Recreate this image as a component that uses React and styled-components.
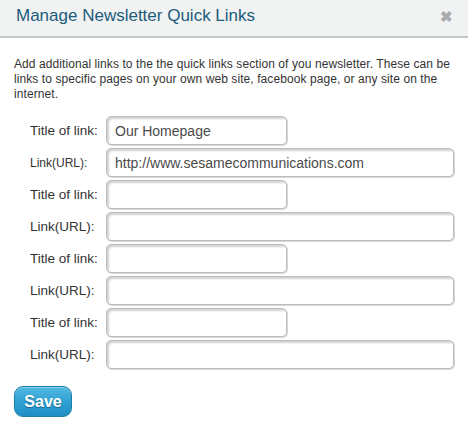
import React from "react";
import styled, { createGlobalStyle } from "styled-components";

const Global = createGlobalStyle`
  html, body { margin: 0; padding: 0; background: #fff; }
  body { font-family: Arial, "Liberation Sans", sans-serif; }
`;

const Dialog = styled.div`
  width: 468px;
  height: 425px;
  background: #fff;
  box-sizing: border-box;
`;

const Header = styled.div`
  height: 38px;
  box-sizing: border-box;
  background: #f1f2f2;
  border-bottom: 2px solid #c3c6c6;
  display: flex;
  align-items: center;
  justify-content: space-between;
  padding: 0 16px 0 16px;
`;

const Title = styled.h1`
  margin: 0;
  font-family: Arial, "Liberation Sans", sans-serif;
  font-weight: normal;
  font-size: 17px;
  color: #1b5c7c;
  position: relative;
  top: -2px;
`;

const Close = styled.span`
  font-size: 15px;
  font-weight: bold;
  color: #a9acac;
  line-height: 1;
  margin-right: -1px;
  position: relative;
  top: -2px;
`;

const Body = styled.div`
  padding: 19px 14px 0 14px;
`;

const Intro = styled.p`
  margin: 0 0 14px 0;
  font-size: 12px;
  line-height: 15px;
  letter-spacing: 0.08px;
  color: #333;
`;

const Form = styled.div`
  display: grid;
  grid-template-columns: 76px auto;
  row-gap: 3px;
  padding-left: 16px;
`;

const Label = styled.label`
  display: flex;
  align-items: center;
  font-size: ${(p) => (p.$small ? "12px" : "13.5px")};
  color: #333;
  white-space: nowrap;
`;

const Input = styled.input`
  box-sizing: border-box;
  width: ${(p) => (p.$wide ? "348px" : "181px")};
  height: 29px;
  border: 1px solid #bcbcbc;
  border-radius: 5px;
  box-shadow: inset 2px 2px 2px rgba(0, 0, 0, 0.18), 1px 1px 0 #d8d8d8;
  padding: 0 8px;
  font-family: Arial, "Liberation Sans", sans-serif;
  font-size: 14px;
  color: #4a4a4a;
  outline: none;
  background: #fff;
`;

const Save = styled.button`
  margin-top: 17px;
  width: 58px;
  height: 31px;
  border-radius: 9px;
  border: 1px solid #1a7fa8;
  background: linear-gradient(#52b8e2, #2d9fd2 55%, #1e8fc4);
  box-shadow: inset 0 1px 0 rgba(255, 255, 255, 0.35);
  color: #fff;
  font-family: Arial, "Liberation Sans", sans-serif;
  font-weight: bold;
  font-size: 16px;
  text-shadow: 0 1px 1px rgba(0, 0, 0, 0.35);
  padding: 0;
  cursor: pointer;
`;

const rows = [
  { title: "Our Homepage", url: "http://www.sesamecommunications.com", small: true },
  { title: "", url: "" },
  { title: "", url: "" },
  { title: "", url: "" },
];

export default function App() {
  return (
    <>
      <Global />
      <Dialog>
        <Header>
          <Title>Manage Newsletter Quick Links</Title>
          <Close>✖</Close>
        </Header>
        <Body>
          <Intro>
            Add additional links to the the quick links section of you newsletter. These can be
            links to specific pages on your own web site, facebook page, or any site on the
            internet.
          </Intro>
          <Form>
            {rows.map((r, i) => (
              <React.Fragment key={i}>
                <Label>Title of link:</Label>
                <Input defaultValue={r.title} />
                <Label $small={r.small}>Link(URL):</Label>
                <Input $wide defaultValue={r.url} />
              </React.Fragment>
            ))}
          </Form>
          <Save>Save</Save>
        </Body>
      </Dialog>
    </>
  );
}
